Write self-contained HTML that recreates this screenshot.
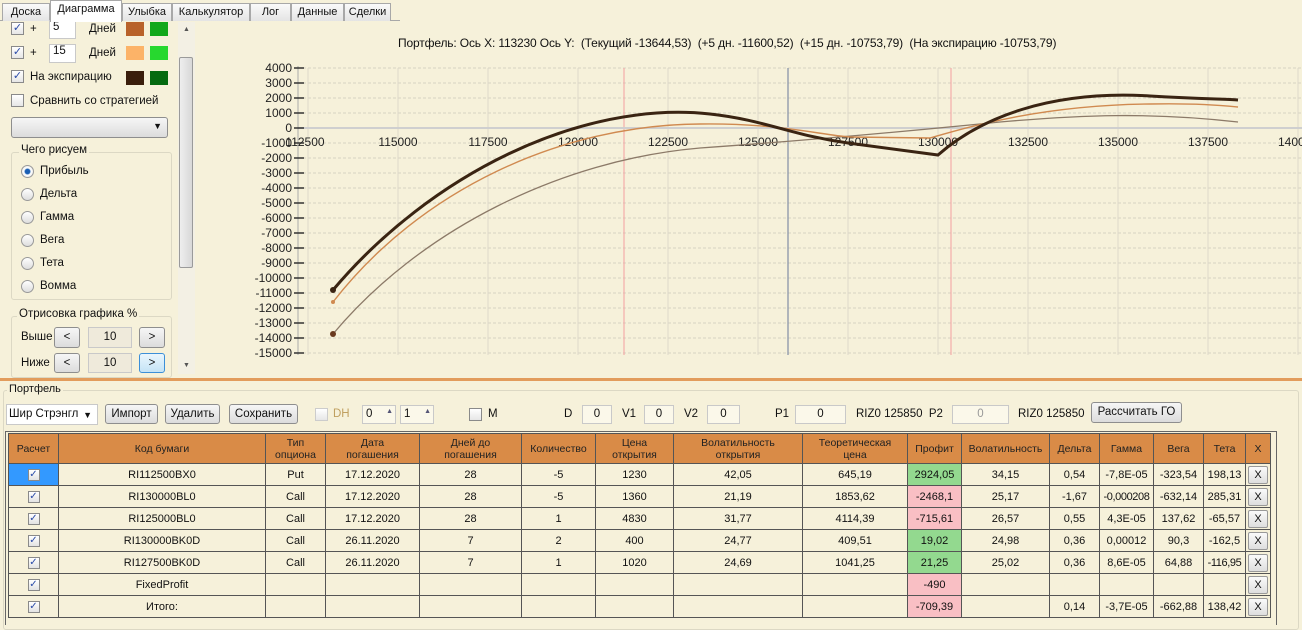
<!DOCTYPE html>
<html><head><meta charset="utf-8"><style>
*{box-sizing:border-box;margin:0;padding:0}
body{width:1302px;height:624px;background:#f6f1da;font-family:"Liberation Sans","DejaVu Sans",sans-serif;font-size:11.5px;color:#111;position:relative;overflow:hidden}
.a{position:absolute;white-space:nowrap}
.tab{position:absolute;top:3px;height:18px;border:1px solid #a8a8a8;border-bottom:none;background:linear-gradient(#fafafa,#e4e4e4);font-size:11px;text-align:center;line-height:17px}
.cb{position:absolute;width:13px;height:13px;border:1px solid #8a8a8a;background:linear-gradient(#fff,#e6e6e6);font-size:11px;line-height:11px;text-align:center;color:#2b4ba8}
.rb{position:absolute;width:13px;height:13px;border:1px solid #999;border-radius:50%;background:linear-gradient(#fff,#ddd)}
.btn{position:absolute;border:1px solid #8e8e8e;border-radius:3px;background:linear-gradient(#f6f6f6,#dcdcdc);text-align:center;font-size:11.5px}
.inp{position:absolute;border:1px solid #c9c9c9;background:#fbf8ea;text-align:center}
table{position:absolute;left:8px;top:433px;border-collapse:collapse;font-size:11px;table-layout:fixed}
td{border:1px solid #555;text-align:center;height:22px;padding:0;overflow:hidden;white-space:nowrap}
th{background:#d98b47;border:1px solid #555;font-weight:normal;font-size:10.5px;height:30px;line-height:12px;color:#222;overflow:hidden}
.g{background:#93d98f}.r{background:#f9bfc4}
.x{display:block;margin:0 auto;width:20px;height:18px;border:1px solid #999;border-radius:2px;background:linear-gradient(#fafafa,#dedede);line-height:17px}
.ck{display:inline-block;width:12px;height:12px;border:1px solid #8a8a8a;background:linear-gradient(#fff,#e2e2e2);font-size:10px;line-height:10px;color:#2b4ba8;vertical-align:middle}
</style></head><body>
<div class="a" style="left:0;top:20px;width:400px;height:1px;background:#a8a8a8"></div>
<div class="tab" style="left:2px;width:48px">Доска</div>
<div class="tab" style="left:50px;top:0;height:22px;width:72px;background:#fff;z-index:2">Диаграмма</div>
<div class="tab" style="left:122px;width:50px">Улыбка</div>
<div class="tab" style="left:172px;width:78px">Калькулятор</div>
<div class="tab" style="left:250px;width:41px">Лог</div>
<div class="tab" style="left:291px;width:53px">Данные</div>
<div class="tab" style="left:344px;width:47px">Сделки</div>
<div class="cb" style="left:11px;top:22px">✓</div><div class="a" style="left:30px;top:23px">+</div>
<div class="inp" style="left:49px;top:20px;width:27px;height:19px;background:#fff;text-align:left;padding-left:3px">5</div>
<div class="a" style="left:89px;top:23px">Дней</div>
<div class="a" style="left:126px;top:22px;width:18px;height:14px;background:#b8622a"></div>
<div class="a" style="left:150px;top:22px;width:18px;height:14px;background:#12a81a"></div>
<div class="cb" style="left:11px;top:46px">✓</div><div class="a" style="left:30px;top:47px">+</div>
<div class="inp" style="left:49px;top:44px;width:27px;height:19px;background:#fff;text-align:left;padding-left:3px">15</div>
<div class="a" style="left:89px;top:47px">Дней</div>
<div class="a" style="left:126px;top:46px;width:18px;height:14px;background:#fcb368"></div>
<div class="a" style="left:150px;top:46px;width:18px;height:14px;background:#27d82f"></div>
<div class="cb" style="left:11px;top:70px">✓</div><div class="a" style="left:30px;top:71px">На экспирацию</div>
<div class="a" style="left:126px;top:71px;width:18px;height:14px;background:#3a1e0c"></div>
<div class="a" style="left:150px;top:71px;width:18px;height:14px;background:#056a10"></div>
<div class="cb" style="left:11px;top:94px"></div><div class="a" style="left:30px;top:95px">Сравнить со стратегией</div>
<div class="btn" style="left:11px;top:117px;width:157px;height:21px"><span class="a" style="right:5px;top:3px;font-size:9px">▼</span></div>
<div class="a" style="left:11px;top:152px;width:161px;height:148px;border:1px solid #dcd8c4;border-radius:3px"></div>
<div class="a" style="left:19px;top:144px;background:#f6f1da;padding:0 2px">Чего рисуем</div>
<div class="rb" style="left:21px;top:165px;background:radial-gradient(#1a5fb4 30%,#fff 45%,#ddd)"></div><div class="a" style="left:40px;top:165px">Прибыль</div>
<div class="rb" style="left:21px;top:188px"></div><div class="a" style="left:40px;top:188px">Дельта</div>
<div class="rb" style="left:21px;top:211px"></div><div class="a" style="left:40px;top:211px">Гамма</div>
<div class="rb" style="left:21px;top:234px"></div><div class="a" style="left:40px;top:234px">Вега</div>
<div class="rb" style="left:21px;top:257px"></div><div class="a" style="left:40px;top:257px">Тета</div>
<div class="rb" style="left:21px;top:280px"></div><div class="a" style="left:40px;top:280px">Вомма</div>
<div class="a" style="left:11px;top:316px;width:161px;height:62px;border:1px solid #dcd8c4;border-radius:3px"></div>
<div class="a" style="left:17px;top:308px;background:#f6f1da;padding:0 2px">Отрисовка графика %</div>
<div class="a" style="left:21px;top:331px">Выше</div>
<div class="btn" style="left:54px;top:327px;width:26px;height:21px;line-height:19px">&lt;</div>
<div class="inp" style="left:88px;top:327px;width:44px;height:21px;line-height:19px;background:#efeadb">10</div>
<div class="btn" style="left:139px;top:327px;width:26px;height:21px;line-height:19px">&gt;</div>
<div class="a" style="left:21px;top:357px">Ниже</div>
<div class="btn" style="left:54px;top:353px;width:26px;height:20px;line-height:18px">&lt;</div>
<div class="inp" style="left:88px;top:353px;width:44px;height:20px;line-height:18px;background:#efeadb">10</div>
<div class="btn" style="left:139px;top:353px;width:26px;height:20px;line-height:18px;border-color:#3c8fd8;background:linear-gradient(#eaf6fd,#c4e3f6)">&gt;</div>
<div class="a" style="left:178px;top:22px;width:17px;height:352px;background:#f3f0e4"></div>
<div class="a" style="left:183px;top:26px;font-size:7px;color:#555">▲</div>
<div class="a" style="left:183px;top:362px;font-size:7px;color:#555">▼</div>
<div class="a" style="left:179px;top:57px;width:14px;height:211px;border:1px solid #9a9a9a;border-radius:2px;background:linear-gradient(90deg,#eee,#d8d8d8)"></div>
<div class="a" style="left:398px;top:36px;font-size:12px;letter-spacing:-0.15px">Портфель: Ось X: 113230 Ось Y:&nbsp; (Текущий -13644,53)&nbsp; (+5 дн. -11600,52)&nbsp; (+15 дн. -10753,79)&nbsp; (На экспирацию -10753,79)</div>
<svg class="a" style="left:0;top:0" width="1302" height="380" font-family="Liberation Sans,sans-serif" font-size="12">
<g stroke="#d6d2c2" stroke-dasharray="3,2" stroke-width="1">
<line x1="298" y1="68" x2="1302" y2="68"/><line x1="298" y1="83" x2="1302" y2="83"/><line x1="298" y1="98" x2="1302" y2="98"/><line x1="298" y1="113" x2="1302" y2="113"/>
<line x1="298" y1="143" x2="1302" y2="143"/><line x1="298" y1="158" x2="1302" y2="158"/><line x1="298" y1="173" x2="1302" y2="173"/><line x1="298" y1="188" x2="1302" y2="188"/><line x1="298" y1="203" x2="1302" y2="203"/><line x1="298" y1="218" x2="1302" y2="218"/><line x1="298" y1="233" x2="1302" y2="233"/><line x1="298" y1="248" x2="1302" y2="248"/><line x1="298" y1="263" x2="1302" y2="263"/><line x1="298" y1="278" x2="1302" y2="278"/><line x1="298" y1="293" x2="1302" y2="293"/><line x1="298" y1="308" x2="1302" y2="308"/><line x1="298" y1="323" x2="1302" y2="323"/><line x1="298" y1="338" x2="1302" y2="338"/><line x1="298" y1="353" x2="1302" y2="353"/>
</g>
<g stroke="#ddd9c9" stroke-width="1">
<line x1="308" y1="68" x2="308" y2="355"/><line x1="398" y1="68" x2="398" y2="355"/><line x1="488" y1="68" x2="488" y2="355"/><line x1="578" y1="68" x2="578" y2="355"/><line x1="668" y1="68" x2="668" y2="355"/><line x1="758" y1="68" x2="758" y2="355"/><line x1="848" y1="68" x2="848" y2="355"/><line x1="938" y1="68" x2="938" y2="355"/><line x1="1028" y1="68" x2="1028" y2="355"/><line x1="1118" y1="68" x2="1118" y2="355"/><line x1="1208" y1="68" x2="1208" y2="355"/><line x1="1298" y1="68" x2="1298" y2="355"/>
</g>
<line x1="624" y1="68" x2="624" y2="355" stroke="#f4a0a0"/>
<line x1="951" y1="68" x2="951" y2="355" stroke="#f4a0a0"/>
<line x1="788" y1="68" x2="788" y2="355" stroke="#8a95a8" stroke-width="1.3"/>
<line x1="298" y1="128" x2="1302" y2="128" stroke="#cfcfcf" stroke-width="2"/>
<line x1="298" y1="66" x2="298" y2="355" stroke="#aaa"/>
<g stroke="#333" stroke-width="1.5">
<line x1="294" y1="68" x2="304" y2="68"/><line x1="294" y1="83" x2="304" y2="83"/><line x1="294" y1="98" x2="304" y2="98"/><line x1="294" y1="113" x2="304" y2="113"/><line x1="294" y1="128" x2="304" y2="128"/><line x1="294" y1="143" x2="304" y2="143"/><line x1="294" y1="158" x2="304" y2="158"/><line x1="294" y1="173" x2="304" y2="173"/><line x1="294" y1="188" x2="304" y2="188"/><line x1="294" y1="203" x2="304" y2="203"/><line x1="294" y1="218" x2="304" y2="218"/><line x1="294" y1="233" x2="304" y2="233"/><line x1="294" y1="248" x2="304" y2="248"/><line x1="294" y1="263" x2="304" y2="263"/><line x1="294" y1="278" x2="304" y2="278"/><line x1="294" y1="293" x2="304" y2="293"/><line x1="294" y1="308" x2="304" y2="308"/><line x1="294" y1="323" x2="304" y2="323"/><line x1="294" y1="338" x2="304" y2="338"/><line x1="294" y1="353" x2="304" y2="353"/>
</g>
<g text-anchor="end" fill="#222">
<text x="292" y="72">4000</text><text x="292" y="87">3000</text><text x="292" y="102">2000</text><text x="292" y="117">1000</text><text x="292" y="132">0</text><text x="292" y="147">-1000</text><text x="292" y="162">-2000</text><text x="292" y="177">-3000</text><text x="292" y="192">-4000</text><text x="292" y="207">-5000</text><text x="292" y="222">-6000</text><text x="292" y="237">-7000</text><text x="292" y="252">-8000</text><text x="292" y="267">-9000</text><text x="292" y="282">-10000</text><text x="292" y="297">-11000</text><text x="292" y="312">-12000</text><text x="292" y="327">-13000</text><text x="292" y="342">-14000</text><text x="292" y="357">-15000</text>
</g>
<g text-anchor="middle" fill="#222">
<text x="305" y="146">112500</text><text x="398" y="146">115000</text><text x="488" y="146">117500</text><text x="578" y="146">120000</text><text x="668" y="146">122500</text><text x="758" y="146">125000</text><text x="848" y="146">127500</text><text x="938" y="146">130000</text><text x="1028" y="146">132500</text><text x="1118" y="146">135000</text><text x="1208" y="146">137500</text><text x="1298" y="146">140000</text>
</g>
<path d="M333,334 C420,230 560,160 700,148 C800,141 900,132 1000,122 C1080,115 1150,112 1238,122" fill="none" stroke="#8c7a68" stroke-width="1.3"/>
<path d="M333,302 C420,190 560,125 700,124 C780,123 820,135 850,137 L930,138 C965,128 1040,105 1150,104 C1200,103 1228,106 1238,107" fill="none" stroke="#d08a50" stroke-width="1.4"/>
<path d="M333,290 C430,175 580,100 710,114 C765,120 790,135 848,143 L938,155 C980,118 1050,90 1150,96 C1200,99 1225,99 1238,100" fill="none" stroke="#3a2412" stroke-width="3"/>
<circle cx="333" cy="290" r="3" fill="#3a2412"/><circle cx="333" cy="302" r="2" fill="#d08a50"/><circle cx="333" cy="334" r="3" fill="#6a3a1e"/>
</svg>
<div class="a" style="left:0;top:378px;width:1302px;height:3px;background:#e29c5c"></div>
<div class="a" style="left:3px;top:390px;width:1296px;height:240px;border:1px solid #dcd8c4;border-radius:3px"></div>
<div class="a" style="left:7px;top:383px;background:#f6f1da;padding:0 2px;font-size:11px">Портфель</div>
<div class="inp" style="left:6px;top:404px;width:92px;height:21px;background:#fff;text-align:left;padding:3px 2px;font-size:11.5px">Шир Стрэнгл<span class="a" style="right:5px;top:5px;font-size:9px">▼</span></div>
<div class="btn" style="left:105px;top:404px;width:53px;height:20px;line-height:18px">Импорт</div>
<div class="btn" style="left:165px;top:404px;width:55px;height:20px;line-height:18px">Удалить</div>
<div class="btn" style="left:229px;top:404px;width:69px;height:20px;line-height:18px">Сохранить</div>
<div class="cb" style="left:315px;top:408px;border-color:#ccc"></div><div class="a" style="left:333px;top:408px;color:#c0a060">DH</div>
<div class="inp" style="left:362px;top:405px;width:34px;height:19px;text-align:left;padding:2px 3px">0<span class="a" style="right:2px;top:2px;font-size:7px;color:#557">▲</span></div>
<div class="inp" style="left:400px;top:405px;width:34px;height:19px;text-align:left;padding:2px 3px">1<span class="a" style="right:2px;top:2px;font-size:7px;color:#557">▲</span></div>
<div class="cb" style="left:469px;top:408px"></div><div class="a" style="left:488px;top:408px">M</div>
<div class="a" style="left:564px;top:408px">D</div><div class="inp" style="left:582px;top:405px;width:30px;height:19px;line-height:17px">0</div>
<div class="a" style="left:622px;top:408px">V1</div><div class="inp" style="left:644px;top:405px;width:30px;height:19px;line-height:17px">0</div>
<div class="a" style="left:684px;top:408px">V2</div><div class="inp" style="left:707px;top:405px;width:33px;height:19px;line-height:17px">0</div>
<div class="a" style="left:775px;top:408px">P1</div><div class="inp" style="left:795px;top:405px;width:51px;height:19px;line-height:17px">0</div>
<div class="a" style="left:856px;top:408px">RIZ0 125850&nbsp; P2</div><div class="inp" style="left:952px;top:405px;width:57px;height:19px;line-height:17px;color:#999">0</div>
<div class="a" style="left:1018px;top:408px">RIZ0 125850</div>
<div class="btn" style="left:1091px;top:402px;width:91px;height:21px;line-height:19px">Рассчитать ГО</div>
<div class="a" style="left:5px;top:431px;width:1272px;height:194px;border:1px solid #666;border-bottom:none"></div>
<table>
<colgroup><col style="width:50px"><col style="width:207px"><col style="width:60px"><col style="width:94px"><col style="width:102px"><col style="width:74px"><col style="width:78px"><col style="width:129px"><col style="width:105px"><col style="width:54px"><col style="width:88px"><col style="width:50px"><col style="width:54px"><col style="width:50px"><col style="width:42px"><col style="width:25px"></colgroup>
<tr><th>Расчет</th><th>Код бумаги</th><th>Тип<br>опциона</th><th>Дата<br>погашения</th><th>Дней до<br>погашения</th><th>Количество</th><th>Цена<br>открытия</th><th>Волатильность<br>открытия</th><th>Теоретическая<br>цена</th><th>Профит</th><th>Волатильность</th><th>Дельта</th><th>Гамма</th><th>Вега</th><th>Тета</th><th>X</th></tr>
<tr><td style="background:#3399ff"><span class="ck">✓</span></td><td>RI112500BX0</td><td>Put</td><td>17.12.2020</td><td>28</td><td>-5</td><td>1230</td><td>42,05</td><td>645,19</td><td class="g">2924,05</td><td>34,15</td><td>0,54</td><td>-7,8E-05</td><td>-323,54</td><td>198,13</td><td><span class="x">X</span></td></tr>
<tr><td><span class="ck">✓</span></td><td>RI130000BL0</td><td>Call</td><td>17.12.2020</td><td>28</td><td>-5</td><td>1360</td><td>21,19</td><td>1853,62</td><td class="r">-2468,1</td><td>25,17</td><td>-1,67</td><td style="letter-spacing:-0.4px">-0,000208</td><td>-632,14</td><td>285,31</td><td><span class="x">X</span></td></tr>
<tr><td><span class="ck">✓</span></td><td>RI125000BL0</td><td>Call</td><td>17.12.2020</td><td>28</td><td>1</td><td>4830</td><td>31,77</td><td>4114,39</td><td class="r">-715,61</td><td>26,57</td><td>0,55</td><td>4,3E-05</td><td>137,62</td><td>-65,57</td><td><span class="x">X</span></td></tr>
<tr><td><span class="ck">✓</span></td><td>RI130000BK0D</td><td>Call</td><td>26.11.2020</td><td>7</td><td>2</td><td>400</td><td>24,77</td><td>409,51</td><td class="g">19,02</td><td>24,98</td><td>0,36</td><td>0,00012</td><td>90,3</td><td>-162,5</td><td><span class="x">X</span></td></tr>
<tr><td><span class="ck">✓</span></td><td>RI127500BK0D</td><td>Call</td><td>26.11.2020</td><td>7</td><td>1</td><td>1020</td><td>24,69</td><td>1041,25</td><td class="g">21,25</td><td>25,02</td><td>0,36</td><td>8,6E-05</td><td>64,88</td><td style="letter-spacing:-0.4px">-116,95</td><td><span class="x">X</span></td></tr>
<tr><td><span class="ck">✓</span></td><td>FixedProfit</td><td></td><td></td><td></td><td></td><td></td><td></td><td></td><td class="r">-490</td><td></td><td></td><td></td><td></td><td></td><td><span class="x">X</span></td></tr>
<tr><td><span class="ck">✓</span></td><td>Итого:</td><td></td><td></td><td></td><td></td><td></td><td></td><td></td><td class="r">-709,39</td><td></td><td>0,14</td><td>-3,7E-05</td><td>-662,88</td><td>138,42</td><td><span class="x">X</span></td></tr>
</table>
</body></html>
